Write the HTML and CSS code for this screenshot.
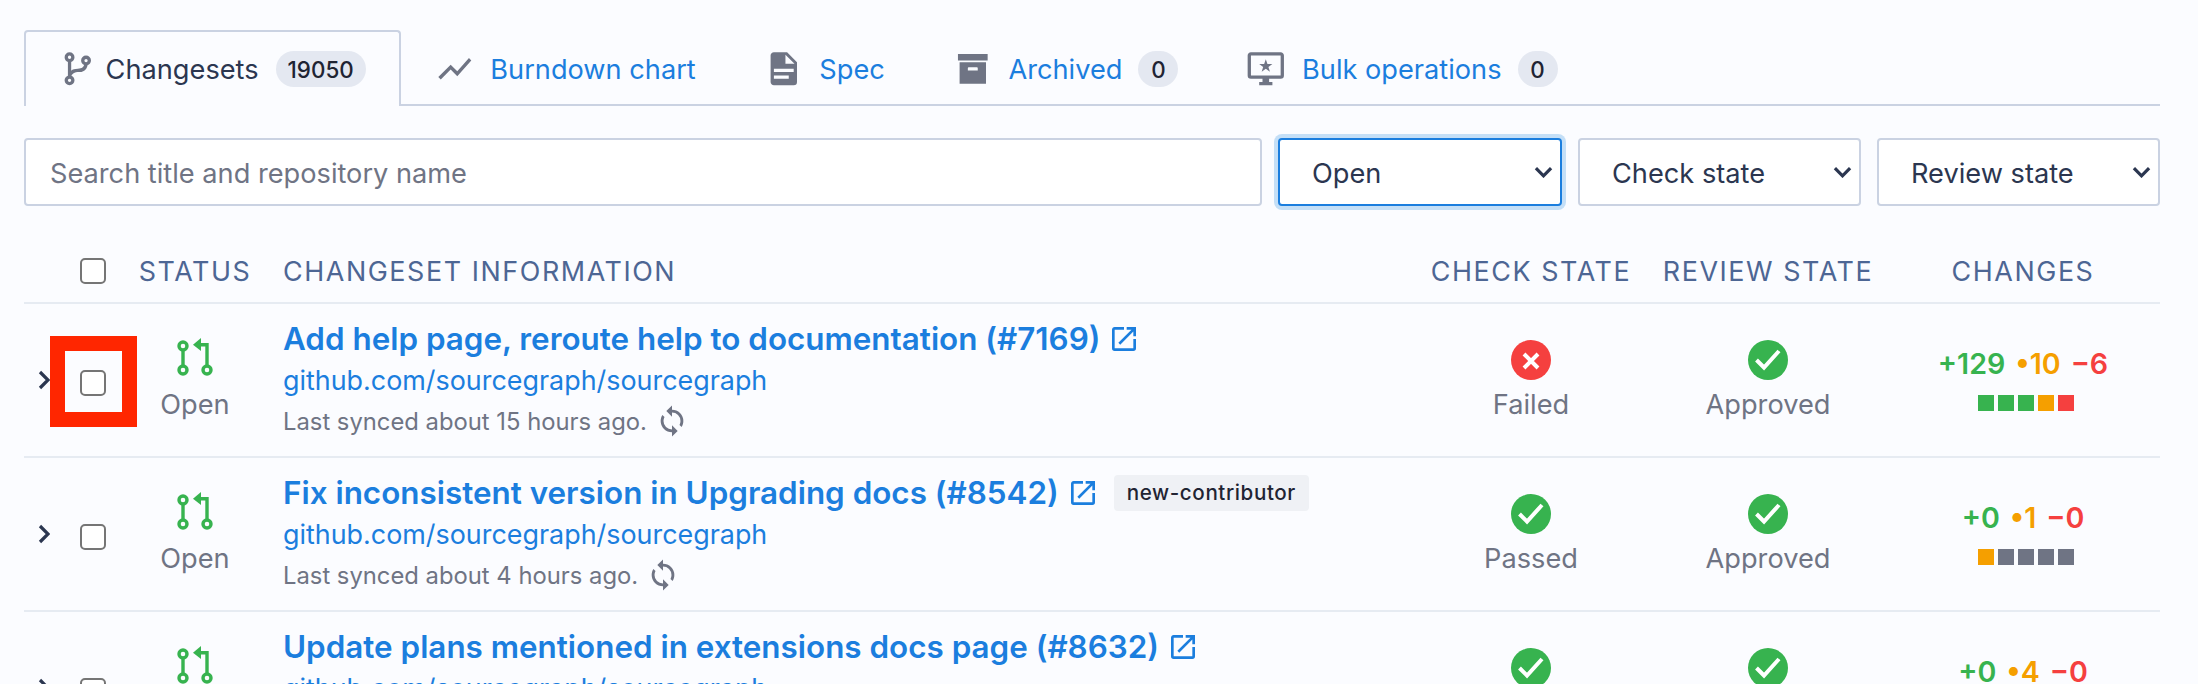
FILE: index.html
```html
<!DOCTYPE html>
<html lang="en">
<head>
<meta charset="utf-8">
<title>Changesets</title>
<link rel="stylesheet" href="styles.css">
</head>
<body>
<main class="page">
  <nav class="tabs">
    <a class="tab tab-active">
      <svg class="icon tab-icon-first" viewBox="0 0 24 24"><path d="M13,14C9.64,14 8.54,15.35 8.18,16.24C9.25,16.7 10,17.76 10,19A3,3 0 0,1 7,22A3,3 0 0,1 4,19C4,17.69 4.83,16.58 6,16.17V7.83C4.83,7.42 4,6.31 4,5A3,3 0 0,1 7,2A3,3 0 0,1 10,5C10,6.31 9.17,7.42 8,7.83V13.12C8.88,12.47 10.17,12 12,12C14.67,12 15.56,10.66 15.85,9.77C14.77,9.32 14,8.25 14,7A3,3 0 0,1 17,4A3,3 0 0,1 20,7C20,8.34 19.12,9.5 17.9,9.86C17.65,11.29 16.68,14 13,14M7,18A1,1 0 0,0 6,19A1,1 0 0,0 7,20A1,1 0 0,0 8,19A1,1 0 0,0 7,18M7,4A1,1 0 0,0 6,5A1,1 0 0,0 7,6A1,1 0 0,0 8,5A1,1 0 0,0 7,4M17,6A1,1 0 0,0 16,7A1,1 0 0,0 17,8A1,1 0 0,0 18,7A1,1 0 0,0 17,6Z"/></svg>
      <span class="tab-label">Changesets</span><span class="count">19050</span>
    </a>
    <a class="tab">
      <svg class="icon" viewBox="0 0 24 24"><path d="M3.5,18.5L9.5,12.5L13.5,16.5L22,6.92L20.59,5.5L13.5,13.5L9.5,9.5L2,17L3.5,18.5Z"/></svg>
      <span class="tab-label">Burndown chart</span>
    </a>
    <a class="tab">
      <svg class="icon" viewBox="0 0 24 24"><path d="M13,9H18.5L13,3.5V9M6,2H14L20,8V20A2,2 0 0,1 18,22H6C4.89,22 4,21.1 4,20V4C4,2.89 4.89,2 6,2M15,18V16H6V18H15M18,14V12H6V14H18Z"/></svg>
      <span class="tab-label">Spec</span>
    </a>
    <a class="tab">
      <svg class="icon" viewBox="0 0 24 24"><path d="M3,3H21V7H3V3M4,8H20V21H4V8M9.5,11A0.5,0.5 0 0,0 9,11.5V13H15V11.5A0.5,0.5 0 0,0 14.5,11H9.5Z"/></svg>
      <span class="tab-label">Archived</span><span class="count">0</span>
    </a>
    <a class="tab">
      <svg class="icon" viewBox="0 0 24 24"><path d="M21,16H3V4H21M21,2H3C1.89,2 1,2.89 1,4V16A2,2 0 0,0 3,18H10V20H8V22H16V20H14V18H21A2,2 0 0,0 23,16V4C23,2.89 22.1,2 21,2Z"/><path d="M12,6.2L13,9.1H16L13.6,10.9L14.5,13.8L12,12L9.5,13.8L10.4,10.9L8,9.1H11Z"/></svg>
      <span class="tab-label">Bulk operations</span><span class="count">0</span>
    </a>
  </nav>

  <form class="filters">
    <input class="search" type="text" placeholder="Search title and repository name">
    <select class="select select-focus"><option>Open</option></select>
    <select class="select"><option>Check state</option></select>
    <select class="select"><option>Review state</option></select>
  </form>

  <section class="list">
    <div class="row head">
      <span></span>
      <span class="cell-box"><span class="box box-head"></span></span>
      <span class="center">Status</span>
      <span class="info-head">Changeset information</span>
      <span class="center">Check state</span>
      <span class="center">Review state</span>
      <span class="center">Changes</span>
    </div>

    <article class="row item">
      <svg class="chevron" viewBox="0 0 12 20"><path d="M2 2l8 8-8 8"/></svg>
      <span class="cell-box"><span class="box"></span><span class="marker"></span></span>
      <div class="state">
        <svg class="pr" viewBox="0 0 36 36"><circle cx="6" cy="6" r="4"/><circle cx="6" cy="30" r="4"/><circle cx="30" cy="30" r="4"/><path d="M6 10V26M30 26V4.7H22"/><path class="pr-head" d="M24 -2L16 4.7L24 11Z"/></svg>
        <span>Open</span>
      </div>
      <div class="info">
        <div class="title-line"><a class="title">Add help page, reroute help to documentation (#7169)</a><svg class="ext" viewBox="0 0 24 24"><path d="M14,3V5H17.59L7.76,14.83L9.17,16.24L19,6.41V10H21V3M19,19H5V5H12V3H5C3.89,3 3,3.9 3,5V19A2,2 0 0,0 5,21H19A2,2 0 0,0 21,19V12H19V19Z"/></svg></div>
        <a class="repo">github.com/sourcegraph/sourcegraph</a>
        <div class="synced">Last synced about 15 hours ago.<svg class="sync" viewBox="0 0 24 24"><path d="M12,18A6,6 0 0,1 6,12C6,11 6.25,10.03 6.7,9.2L5.24,7.74C4.46,8.97 4,10.43 4,12A8,8 0 0,0 12,20V23L16,19L12,15M12,4V1L8,5L12,9V6A6,6 0 0,1 18,12C18,13 17.75,13.97 17.3,14.8L18.76,16.26C19.54,15.03 20,13.57 20,12A8,8 0 0,0 12,4Z"/></svg></div>
      </div>
      <div class="state"><svg class="dot dot-red" viewBox="0 0 40 40"><circle cx="20" cy="20" r="20"/><path d="M13 14L27 28M27 14L13 28"/></svg><span>Failed</span></div>
      <div class="state"><svg class="dot dot-green" viewBox="0 0 40 40"><circle cx="20" cy="20" r="20"/><path d="M8.5 20L16 27.5L31 11"/></svg><span>Approved</span></div>
      <div class="changes">
        <div class="diff"><span class="add">+129</span><span class="mod">•10</span><span class="del">−6</span></div>
        <div class="bars"><i class="add-bg"></i><i class="add-bg"></i><i class="add-bg"></i><i class="mod-bg"></i><i class="del-bg"></i></div>
      </div>
    </article>

    <article class="row item">
      <svg class="chevron" viewBox="0 0 12 20"><path d="M2 2l8 8-8 8"/></svg>
      <span class="cell-box"><span class="box"></span></span>
      <div class="state">
        <svg class="pr" viewBox="0 0 36 36"><circle cx="6" cy="6" r="4"/><circle cx="6" cy="30" r="4"/><circle cx="30" cy="30" r="4"/><path d="M6 10V26M30 26V4.7H22"/><path class="pr-head" d="M24 -2L16 4.7L24 11Z"/></svg>
        <span>Open</span>
      </div>
      <div class="info">
        <div class="title-line"><a class="title">Fix inconsistent version in Upgrading docs (#8542)</a><svg class="ext" viewBox="0 0 24 24"><path d="M14,3V5H17.59L7.76,14.83L9.17,16.24L19,6.41V10H21V3M19,19H5V5H12V3H5C3.89,3 3,3.9 3,5V19A2,2 0 0,0 5,21H19A2,2 0 0,0 21,19V12H19V19Z"/></svg><span class="label">new-contributor</span></div>
        <a class="repo">github.com/sourcegraph/sourcegraph</a>
        <div class="synced">Last synced about 4 hours ago.<svg class="sync" viewBox="0 0 24 24"><path d="M12,18A6,6 0 0,1 6,12C6,11 6.25,10.03 6.7,9.2L5.24,7.74C4.46,8.97 4,10.43 4,12A8,8 0 0,0 12,20V23L16,19L12,15M12,4V1L8,5L12,9V6A6,6 0 0,1 18,12C18,13 17.75,13.97 17.3,14.8L18.76,16.26C19.54,15.03 20,13.57 20,12A8,8 0 0,0 12,4Z"/></svg></div>
      </div>
      <div class="state"><svg class="dot dot-green" viewBox="0 0 40 40"><circle cx="20" cy="20" r="20"/><path d="M8.5 20L16 27.5L31 11"/></svg><span>Passed</span></div>
      <div class="state"><svg class="dot dot-green" viewBox="0 0 40 40"><circle cx="20" cy="20" r="20"/><path d="M8.5 20L16 27.5L31 11"/></svg><span>Approved</span></div>
      <div class="changes">
        <div class="diff"><span class="add">+0</span><span class="mod">•1</span><span class="del">−0</span></div>
        <div class="bars"><i class="mod-bg"></i><i class="none-bg"></i><i class="none-bg"></i><i class="none-bg"></i><i class="none-bg"></i></div>
      </div>
    </article>

    <article class="row item">
      <svg class="chevron" viewBox="0 0 12 20"><path d="M2 2l8 8-8 8"/></svg>
      <span class="cell-box"><span class="box"></span></span>
      <div class="state">
        <svg class="pr" viewBox="0 0 36 36"><circle cx="6" cy="6" r="4"/><circle cx="6" cy="30" r="4"/><circle cx="30" cy="30" r="4"/><path d="M6 10V26M30 26V4.7H22"/><path class="pr-head" d="M24 -2L16 4.7L24 11Z"/></svg>
      </div>
      <div class="info">
        <div class="title-line"><a class="title">Update plans mentioned in extensions docs page (#8632)</a><svg class="ext" viewBox="0 0 24 24"><path d="M14,3V5H17.59L7.76,14.83L9.17,16.24L19,6.41V10H21V3M19,19H5V5H12V3H5C3.89,3 3,3.9 3,5V19A2,2 0 0,0 5,21H19A2,2 0 0,0 21,19V12H19V19Z"/></svg></div>
        <a class="repo">github.com/sourcegraph/sourcegraph</a>
      </div>
      <div class="state"><svg class="dot dot-green" viewBox="0 0 40 40"><circle cx="20" cy="20" r="20"/><path d="M8.5 20L16 27.5L31 11"/></svg></div>
      <div class="state"><svg class="dot dot-green" viewBox="0 0 40 40"><circle cx="20" cy="20" r="20"/><path d="M8.5 20L16 27.5L31 11"/></svg></div>
      <div class="changes">
        <div class="diff"><span class="add">+0</span><span class="mod">•4</span><span class="del">−0</span></div>
      </div>
    </article>
  </section>
</main>
</body>
</html>
```

FILE: styles.css
```css
* { box-sizing: border-box; }

html, body {
  margin: 0;
  height: 684px;
  overflow: hidden;
  background: #fbfcff;
}

body {
  font-family: Inter, "Liberation Sans", sans-serif;
  font-size: 27.2px;
  color: #2b3650;
}

.page {
  padding: 30px 38px 0 24px;
}

/* Tabs */
.tabs {
  display: flex;
  height: 76px;
  border-bottom: 2px solid #cad2e2;
}

.tab {
  display: flex;
  align-items: center;
  height: 76px;
  padding: 0 32px;
  border: 2px solid transparent;
  border-bottom: 0;
  color: #1b7ede;
}

.tab-active {
  padding-right: 33px;
  border-color: #cad2e2;
  border-radius: 4px 4px 0 0;
  background: #fbfcff;
  color: #2b3650;
}

.tab-active .count {
  margin-left: 17px;
}

.icon {
  flex: none;
  width: 39.6px;
  height: 39.6px;
  margin-right: 16px;
  fill: #6f7484;
}

.tab-icon-first {
  margin-right: 8px;
}

.count {
  display: flex;
  align-items: center;
  justify-content: center;
  min-width: 40px;
  height: 36px;
  margin-left: 16px;
  padding: 0 12px;
  border-radius: 18px;
  background: #e4e8f1;
  color: #1f2433;
  font-size: 22.4px;
  font-weight: 500;
}

/* Filters */
.filters {
  display: flex;
  gap: 16px;
  margin-top: 32px;
}

.search,
.select {
  height: 68px;
  padding-top: 2px;
  border: 2px solid #cad2e2;
  border-radius: 4px;
  background-color: #fff;
  color: #2b3650;
  font: inherit;
  outline: 0;
}

.search {
  flex: 1;
  padding-top: 4px;
  padding-left: 24px;
  padding-right: 24px;
}

.search::placeholder {
  color: #6f7484;
  opacity: 1;
}

.select {
  width: 283px;
  padding-left: 32px;
  padding-right: 32px;
  appearance: none;
  background-image: url("data:image/svg+xml,%3Csvg xmlns='http://www.w3.org/2000/svg' viewBox='0 0 20 12'%3E%3Cpath d='M2 2l8 8 8-8' fill='none' stroke='%232b3650' stroke-width='3.4'/%3E%3C/svg%3E");
  background-repeat: no-repeat;
  background-position: right 7px center;
  background-size: 19px 12px;
}

.select-focus {
  width: 284px;
  border-color: #1b7ede;
  box-shadow: 0 0 0 4px #c4dff7;
}

/* List */
.list {
  margin-top: 32px;
}

.row {
  display: grid;
  grid-template-columns: 40px 58px 146px 1146px 234px 240px 270px;
  align-items: center;
}

.head {
  height: 64px;
  padding-top: 1px;
  color: #4d6694;
  letter-spacing: 1.57px;
  text-transform: uppercase;
  font-size: 26.9px;
}

.center {
  text-align: center;
}

.info-head {
  padding-left: 15px;
}

.item {
  height: 154px;
  border-top: 2px solid #e6ebf2;
}

.chevron {
  justify-self: center;
  width: 12px;
  height: 20px;
  fill: none;
  stroke: #2b3650;
  stroke-width: 3.2;
}

.cell-box {
  position: relative;
  display: flex;
  justify-content: center;
}

.box {
  width: 26px;
  height: 26px;
  margin-top: 6px;
  border: 2px solid #757575;
  border-radius: 5px;
  background: #fff;
}

.box-head {
  margin-top: 0;
}

.marker {
  position: absolute;
  left: -14px;
  top: -28px;
  width: 87px;
  height: 91px;
  border: 15px solid #ff2600;
}

.state {
  display: flex;
  flex-direction: column;
  align-items: center;
  align-self: start;
  padding-top: 36px;
  color: #6f7484;
}

.pr {
  width: 36px;
  height: 36px;
  margin-bottom: 12px;
  overflow: visible;
  fill: none;
  stroke: #37b34f;
  stroke-width: 3.4;
}

.pr-head {
  fill: #37b34f;
  stroke: none;
}

.info {
  align-self: start;
  padding: 13px 0 0 15px;
}

.title-line {
  display: flex;
  align-items: center;
  height: 44px;
}

.title {
  color: #1b7ede;
  font-size: 31.4px;
  font-weight: 600;
}

.ext {
  width: 32px;
  height: 32px;
  margin-left: 8px;
  fill: #1b7ede;
}

.label {
  margin-left: 15px;
  padding: 0 13px;
  height: 36px;
  line-height: 36px;
  border-radius: 4px;
  background: #eff1f5;
  color: #1f2433;
  font-size: 20.6px;
  font-weight: 500;
  letter-spacing: 0.6px;
}

.repo {
  display: block;
  height: 38px;
  line-height: 38px;
  color: #1b7ede;
  font-size: 26.9px;
}

.synced {
  display: flex;
  align-items: center;
  height: 44px;
  color: #6f7484;
  font-size: 23.8px;
}

.sync {
  width: 34px;
  height: 34px;
  margin-left: 8px;
  fill: #6f7484;
}

.dot {
  width: 40px;
  height: 40px;
  margin-bottom: 8px;
  fill: none;
}

.dot path {
  stroke: #fff;
  stroke-width: 4;
}

.dot-red circle { fill: #f5403f; }
.dot-green circle { fill: #37b34f; }

.changes {
  display: flex;
  flex-direction: column;
  align-items: center;
  align-self: start;
  padding-top: 42px;
}

.diff {
  display: flex;
  gap: 10px;
  font-size: 28.6px;
  font-weight: 600;
  line-height: 36px;
}

.add { color: #37b34f; }
.mod { color: #f59f00; }
.del { color: #f5403f; }

.bars {
  display: flex;
  gap: 4px;
  margin-top: 13px;
  margin-left: 6px;
}

.bars i {
  width: 16px;
  height: 16px;
}

.add-bg { background: #37b34f; }
.mod-bg { background: #f59f00; }
.del-bg { background: #f5403f; }
.none-bg { background: #6f7484; }
```
